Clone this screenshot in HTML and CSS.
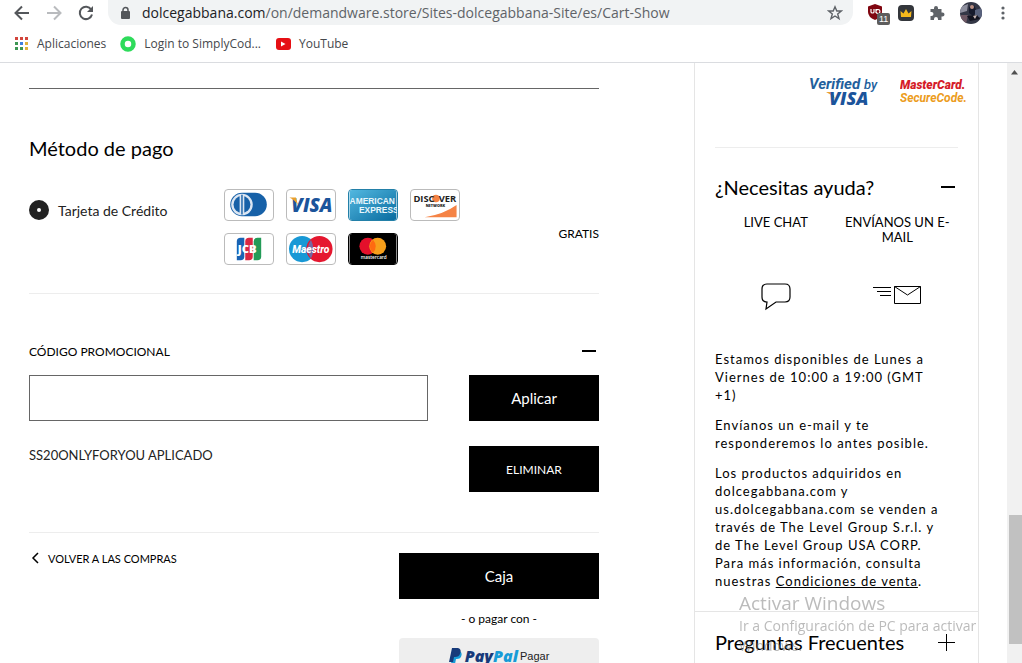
FILE: index.html
```html
<!DOCTYPE html>
<html lang="es">
<head>
    <meta charset="UTF-8">
    <meta name="viewport" content="width=device-width, initial-scale=1.0">
    <title>Cart-Show</title>
    <link rel="stylesheet" href="styles.css">
</head>
<body>

    <header class="browser">
        <div class="toolbar">
            <button class="tool" aria-label="Atrás">
                <svg width="16" height="16" viewBox="0 0 16 16" fill="none" stroke="#54575b" stroke-width="2"><path d="M15 8H2M8 1.500L1.500 8L8 14.500"/></svg>
            </button>
            <button class="tool" aria-label="Adelante">
                <svg width="16" height="16" viewBox="0 0 16 16" fill="none" stroke="#b9bbbe" stroke-width="2"><path d="M1 8H14M8 1.500L14.500 8L8 14.500"/></svg>
            </button>
            <button class="tool" aria-label="Recargar">
                <svg width="16" height="16" viewBox="0 0 16 16"><path d="M13.200 4.500A6.200 6.200 0 1 0 14 9.500" fill="none" stroke="#54575b" stroke-width="2"/><path d="M15 1V7H9Z" fill="#54575b"/></svg>
            </button>
            <div class="address">
                <svg width="10" height="14" viewBox="0 0 10 14"><rect x="0" y="5" width="9" height="8" rx="1" fill="#54575b"/><path d="M2 6V4a2.500 2.500 0 0 1 5 0V6" fill="none" stroke="#54575b" stroke-width="1.500"/></svg>
                <span class="url"><b>dolcegabbana.com</b>/on/demandware.store/Sites-dolcegabbana-Site/es/Cart-Show</span>
                <button class="star" aria-label="Añadir a marcadores">
                    <svg width="16" height="16" viewBox="0 0 16 16" fill="none" stroke="#5f6368" stroke-width="1.400"><path d="M8 1.800L9.800 6H14.300L10.700 9L12 13.600L8 11L4 13.600L5.300 9L1.700 6H6.200Z"/></svg>
                </button>
            </div>
            <div class="extensions">
                <button class="tool ublock" aria-label="uBlock">
                    <svg width="16" height="17" viewBox="0 0 16 17"><path d="M8 0L15 2.500V8Q15 13 8 16Q1 13 1 8V2.500Z" fill="#800610"/><path d="M4 5V8Q4 9 5.500 9T7 8V5M9 5V9M9 7A2 2 0 1 1 9 8" fill="none" stroke="#fff" stroke-width="1.200"/></svg>
                    <span class="badge">11</span>
                </button>
                <button class="tool" aria-label="SimplyCodes">
                    <svg width="16" height="16" viewBox="0 0 16 16"><rect width="16" height="16" rx="4" fill="#33363b"/><path d="M3 12L2.500 6L5.500 8.500L8 4L10.500 8.500L13.500 6L13 12Z" fill="#f5b81c"/></svg>
                </button>
                <button class="tool" aria-label="Extensiones">
                    <svg width="16" height="16" viewBox="0 0 16 16" fill="#5f6368"><path d="M1.500 4H5V3a2 2 0 0 1 4 0V4H12.500V7.500H13.500a2 2 0 0 1 0 4H12.500V15H9V14a2 2 0 0 0-4 0V15H1.500V11H2.500a2 2 0 0 0 0-4H1.500Z"/></svg>
                </button>
                <button class="tool" aria-label="Perfil">
                    <svg width="22" height="22" viewBox="0 0 22 22"><defs><clipPath id="face"><circle cx="11" cy="11" r="11"/></clipPath></defs><g clip-path="url(#face)"><rect width="22" height="22" fill="#343746"/><path d="M0 5L8 2L7 9L0 11Z" fill="#8d8e9d"/><path d="M1 13H8L6 22H0Z" fill="#6d5864"/><path d="M9 5L14 3L17 10L13 14L9 11Z" fill="#161a2c"/><circle cx="12" cy="5" r="2" fill="#b98f83"/><path d="M15 8L22 6V16L15 14Z" fill="#59627d"/><path d="M7 14L17 13L20 17L10 19Z" fill="#12131f"/><path d="M13 14L17 13L15 17Z" fill="#c5b4b2"/></g></svg>
                </button>
                <button class="tool" aria-label="Menú">
                    <svg width="4" height="14" viewBox="0 0 4 14" fill="#5f6368"><circle cx="2" cy="2" r="1.600"/><circle cx="2" cy="7" r="1.600"/><circle cx="2" cy="12" r="1.600"/></svg>
                </button>
            </div>
        </div>
        <nav class="bookmarks">
            <a href="#">
                <svg width="14" height="14" viewBox="0 0 14 14"><path d="M0 0h3v3H0zM5 0h3v3H5zM10 0h3v3h-3z" fill="#d2453c"/><path d="M0 5h3v3H0zM0 10h3v3H0zM5 10h3v3H5z" fill="#3d9653"/><path d="M5 5h3v3H5z" fill="#3f7fe0"/><path d="M10 5h3v3h-3zM10 10h3v3h-3z" fill="#e0b13c"/></svg>
                Aplicaciones
            </a>
            <a href="#">
                <svg width="16" height="16" viewBox="0 0 16 16"><circle cx="8" cy="8" r="5.500" fill="#fff" stroke="#2edb5b" stroke-width="4.500"/></svg>
                Login to SimplyCod...
            </a>
            <a href="#">
                <svg width="16" height="16" viewBox="0 0 16 16"><rect x="1" y="2" width="15" height="12" rx="3" fill="#e60f14"/><path d="M6 5.500L10.500 8L6 10.500Z" fill="#fff"/></svg>
                YouTube
            </a>
        </nav>
    </header>

    <div class="viewport">
        <main class="cart">
            <section class="payment">
                <h2>Método de pago</h2>
                <div class="payment-row">
                    <label class="method"><input type="radio" name="method" checked> Tarjeta de Crédito</label>
                    <div class="cards">
                        <svg class="card" viewBox="0 0 50 32" role="img" aria-label="Diners Club"><rect x="5" y="3" width="39" height="25" rx="12.500" fill="#1761a8"/><circle cx="17.500" cy="15.500" r="11.500" fill="#dce6f2"/><circle cx="17.500" cy="15.500" r="9" fill="#1761a8"/><path d="M15 5H20V26H15Z" fill="#dce6f2"/><path d="M17.500 5V26" stroke="#1761a8" stroke-width="1.500"/></svg>
                        <svg class="card" viewBox="0 0 50 32" role="img" aria-label="Visa"><text x="4" y="23" class="logo-text visa">VISA</text><path d="M2 8H9L11 16Q8 11 2 8Z" fill="#eaa02c"/></svg>
                        <svg class="card amex" viewBox="0 0 50 32" role="img" aria-label="American Express"><defs><linearGradient id="amex" x2="1" y2="1"><stop stop-color="#53b8e0"/><stop offset="1" stop-color="#086b9f"/></linearGradient></defs><rect width="50" height="32" fill="url(#amex)"/><text x="0" y="15" class="logo-text amex-text">AMERICAN</text><text x="10" y="25" class="logo-text amex-text">EXPRESS</text></svg>
                        <svg class="card" viewBox="0 0 50 32" role="img" aria-label="Discover"><path d="M14 29Q34 26 48 16V29Z" fill="#f58345"/><circle cx="26" cy="9" r="4" fill="#f58345"/><text x="2" y="13" class="logo-text discover">DISC</text><text x="29" y="13" class="logo-text discover">VER</text><text x="15" y="18" class="logo-text network">NETWORK</text></svg>
                        <svg class="card" viewBox="0 0 50 32" role="img" aria-label="JCB"><path d="M12 8Q12 4 16 4H20V24Q20 28 16 28H12Z" fill="#1863b4"/><path d="M21 8Q21 4 25 4H29V24Q29 28 25 28H21Z" fill="#d92742"/><path d="M30 8Q30 4 34 4H38V24Q38 28 34 28H30Z" fill="#239b57"/><text x="13" y="20" class="logo-text jcb">JCB</text></svg>
                        <svg class="card" viewBox="0 0 50 32" role="img" aria-label="Maestro"><circle cx="15.500" cy="16" r="14" fill="#1898d5"/><circle cx="34" cy="16" r="14" fill="#e5172f"/><path d="M25 6Q18 16 25 26Q30 16 25 6Z" fill="#7666a0"/><text x="5" y="20" class="logo-text maestro">Maestro</text></svg>
                        <svg class="card mastercard" viewBox="0 0 50 32" role="img" aria-label="Mastercard"><rect width="50" height="32" fill="#000"/><circle cx="19.500" cy="13" r="9" fill="#e4102b"/><circle cx="30" cy="13" r="9" fill="#f79f1b"/><path d="M25 6Q18 13 25 20Q31 13 25 6Z" fill="#ff6a10"/><text x="12" y="27" class="logo-text mc-text">mastercard</text></svg>
                    </div>
                    <span class="price">GRATIS</span>
                </div>
            </section>

            <section class="promo">
                <div class="promo-title">
                    <label for="promoCode">CÓDIGO PROMOCIONAL</label>
                    <button class="toggle" aria-label="Cerrar código promocional"><svg width="14" height="2"><rect width="14" height="2"/></svg></button>
                </div>
                <div class="promo-row">
                    <input type="text" id="promoCode">
                    <button class="black-button large">Aplicar</button>
                </div>
                <div class="promo-row">
                    <span class="applied">SS20ONLYFORYOU APLICADO</span>
                    <button class="black-button">ELIMINAR</button>
                </div>
            </section>

            <section class="checkout">
                <a href="#" class="back"><svg width="8" height="12" viewBox="0 0 8 12" fill="none" stroke="#000" stroke-width="1.500"><path d="M7 1L2 6L7 11"/></svg>VOLVER A LAS COMPRAS</a>
                <div class="pay">
                    <button class="black-button large">Caja</button>
                    <p>- o pagar con -</p>
                    <button class="paypal">
                        <svg width="14" height="16" viewBox="0 0 14 16"><path d="M4 3H10Q14 4 12 9Q11 11 8 11H7L6 16H2Z" fill="#179bd7"/><path d="M3 0H9Q13 1 11 6Q10 9 6 9H5L4 14H0Z" fill="#173a7a"/></svg>
                        <span class="paypal-logo">Pay<i>Pal</i></span>
                        Pagar
                    </button>
                </div>
            </section>
        </main>

        <aside class="sidebar">
            <div class="secure">
                <svg width="70" height="34" viewBox="0 0 70 34" role="img" aria-label="Verified by Visa"><text x="0" y="15" class="logo-text verified">Verified</text><text x="55" y="15" class="logo-text by">by</text><path d="M17 18H23L26 25Q22 20 17 18Z" fill="#eaa02c"/><text x="20" y="31" class="logo-text visa-small">VISA</text></svg>
                <svg width="69" height="34" viewBox="0 0 69 34" role="img" aria-label="MasterCard SecureCode"><text x="0" y="15" class="logo-text master">MasterCard.</text><text x="0" y="28" class="logo-text code">SecureCode.</text></svg>
            </div>
            <section class="help">
                <h3>¿Necesitas ayuda? <button class="toggle" aria-label="Cerrar ayuda"><svg width="14" height="2"><rect width="14" height="2"/></svg></button></h3>
                <div class="contact">
                    <a href="#">
                        <span>LIVE CHAT</span>
                        <svg width="30" height="28" viewBox="0 0 30 28" fill="none" stroke="#000" stroke-width="1.200"><path d="M6 1H24Q29 1 29 6V14Q29 19 24 19H15L5 26L6 19Q1 19 1 14V6Q1 1 6 1Z"/></svg>
                    </a>
                    <a href="#">
                        <span>ENVÍANOS UN E-MAIL</span>
                        <svg width="50" height="28" viewBox="0 0 50 28" fill="none" stroke="#000"><path d="M1 4.500H19M5 8.500H19M8 12.500H19M22.500 3.500H48.500V20.500H22.500ZM22.500 3.500L35.500 12L48.500 3.500"/></svg>
                    </a>
                </div>
                <p>Estamos disponibles de Lunes a Viernes de 10:00 a 19:00 (GMT +1)</p>
                <p>Envíanos un e-mail y te responderemos lo antes posible.</p>
                <p>Los productos adquiridos en dolcegabbana.com y us.dolcegabbana.com se venden a través de The Level Group S.r.l. y de The Level Group USA CORP. Para más información, consulta nuestras <a href="#">Condiciones de venta</a>.</p>
            </section>
            <section class="faq">
                <h3>Preguntas Frecuentes <button class="toggle" aria-label="Abrir preguntas"><svg width="17" height="18" viewBox="0 0 17 18" stroke="#000"><path d="M0 9.500H17M8.500 1V18"/></svg></button></h3>
            </section>
        </aside>

        <div class="scrollbar">
            <svg width="7" height="5" viewBox="0 0 7 5"><path d="M0 4.500L3.500 0L7 4.500Z" fill="#505050"/></svg>
            <div class="thumb"></div>
        </div>
    </div>

    <div class="watermark">
        <strong>Activar Windows</strong>
        <span>Ir a Configuración de PC para activar Windows.</span>
    </div>

</body>
</html>
```
FILE: styles.css
```css
* {
    box-sizing: border-box;
}

body {
    margin: 0;
    height: 100vh;
    display: flex;
    flex-direction: column;
    overflow: hidden;
    background: #fff;
    color: #000;
    font-family: Lato, sans-serif;
    font-size: 13px;
}

button {
    padding: 0;
    border: 0;
    background: none;
    color: inherit;
    font-family: inherit;
}

a {
    color: inherit;
    text-decoration: none;
}

svg {
    display: block;
    flex: none;
}

h2, h3, p {
    margin: 0;
    font-weight: normal;
}

h2, h3 {
    font-size: 20px;
    line-height: 24px;
}

/* browser bars */
.browser {
    flex: none;
    border-bottom: 1px solid #dadce0;
    font-family: "Open Sans", sans-serif;
}

.toolbar {
    display: flex;
    align-items: center;
    height: 25px;
    padding: 0 17px 0 14px;
    gap: 16px;
}

.tool {
    position: relative;
    display: flex;
}

.address {
    flex: 1;
    display: flex;
    align-items: center;
    height: 25px;
    margin-left: -2px;
    padding: 0 10px 0 13px;
    gap: 11px;
    border-radius: 0 0 13px 13px;
    background: #f1f3f4;
    color: #5f6368;
    font-size: 14px;
}

.url {
    flex: 1;
    white-space: nowrap;
}

.url b {
    color: #202124;
    font-weight: normal;
}

.extensions {
    display: flex;
    align-items: center;
    margin-left: -2px;
    gap: 15px;
}

.extensions .tool:last-child {
    margin-left: 4px;
}

.badge {
    position: absolute;
    left: 10px;
    top: 9px;
    padding: 0 2px;
    border-radius: 2px;
    background: #5d5d5d;
    color: #fff;
    font-family: "Liberation Sans", sans-serif;
    font-size: 9px;
    line-height: 12px;
}

.bookmarks {
    display: flex;
    align-items: center;
    height: 37px;
    padding-left: 15px;
    gap: 14px;
    color: #45484c;
    font-size: 12px;
}

.bookmarks a {
    display: flex;
    align-items: center;
    gap: 8px;
}

/* page */
.viewport {
    flex: 1;
    min-height: 0;
    display: flex;
    overflow: hidden;
}

.cart {
    flex: 1;
    margin: 25px 95px 0 29px;
}

.payment {
    padding-top: 47px;
    border-top: 1px solid #666;
}

.payment-row {
    display: flex;
    padding: 29px 0 28px;
    border-bottom: 1px solid #ededed;
}

.method {
    display: flex;
    align-items: center;
    gap: 9px;
    width: 195px;
    height: 42px;
    color: #222;
    font-size: 14px;
}

.method input {
    appearance: none;
    width: 20px;
    height: 20px;
    margin: 0;
    border: 8px solid #222;
    border-radius: 50%;
    background: #fff;
}

.cards {
    display: flex;
    flex-wrap: wrap;
    align-content: flex-start;
    width: 240px;
    gap: 12px;
}

.card {
    width: 50px;
    height: 32px;
    border: 1px solid #bbb;
    border-radius: 4px;
}

.amex {
    border-color: #2380a8;
}

.mastercard {
    border-color: #000;
}

.price {
    margin-left: auto;
    align-self: center;
    padding-top: 12px;
    font-size: 12px;
}

.promo {
    padding: 47px 0 40px;
    border-bottom: 1px solid #ededed;
}

.promo-title {
    display: flex;
    justify-content: space-between;
    align-items: center;
    height: 20px;
    padding-right: 3px;
    font-size: 12px;
}

.promo-row {
    display: flex;
    justify-content: space-between;
    margin-top: 14px;
}

.promo-row + .promo-row {
    margin-top: 25px;
}

.promo-row input {
    width: 70%;
    height: 46px;
    padding: 0 12px;
    border: 1px solid #666;
    font-size: 14px;
}

.promo-row .black-button {
    width: 130px;
}

.applied {
    color: #222;
    line-height: 18px;
}

.black-button {
    height: 46px;
    background: #000;
    color: #fff;
    font-size: 12px;
}

.large {
    font-size: 15px;
}

.checkout {
    display: flex;
    justify-content: space-between;
    align-items: flex-start;
    padding-top: 20px;
}

.back {
    display: flex;
    align-items: center;
    height: 10px;
    padding-left: 2px;
    gap: 9px;
    font-size: 11px;
}

.pay {
    display: flex;
    flex-direction: column;
    width: 200px;
    text-align: center;
}

.pay p {
    height: 39px;
    font-size: 12px;
    line-height: 39px;
}

.paypal {
    display: flex;
    justify-content: center;
    align-items: center;
    gap: 2px;
    height: 36px;
    border-radius: 4px;
    background: #eee;
    color: #222;
    font-family: "Liberation Sans", sans-serif;
    font-size: 11px;
}

.paypal-logo {
    color: #173a7a;
    font-family: "Open Sans", sans-serif;
    font-size: 16px;
    font-style: italic;
    font-weight: 800;
}

.paypal-logo i {
    color: #179bd7;
}

/* help column */
.sidebar {
    flex: none;
    width: 285px;
    margin-right: 28px;
    border: 1px solid #e5e5e5;
    border-width: 0 1px;
}

.secure {
    display: flex;
    justify-content: flex-end;
    height: 85px;
    margin: 0 20px;
    padding-top: 11px;
    gap: 21px;
    border-bottom: 1px solid #ededed;
}

.secure svg {
    margin-right: -11px;
}

.secure svg:first-child {
    margin-right: 0;
}

.help {
    padding: 27px 20px 21px;
}

h3 {
    display: flex;
    justify-content: space-between;
    align-items: center;
    padding-right: 3px;
}

.contact {
    display: grid;
    grid-template-columns: 1fr 1fr;
    margin-bottom: 39px;
    padding-top: 16px;
    line-height: 15px;
    text-align: center;
}

.contact a {
    display: flex;
    flex-direction: column;
    align-items: center;
}

.contact span {
    height: 68px;
    width: 120px;
}

.help p {
    margin-bottom: 12px;
    padding-right: 13px;
    font-size: 13px;
    letter-spacing: 1px;
    line-height: 18px;
}

.help p:last-child {
    margin: 0;
}

.help p a {
    text-decoration: underline;
}

.faq {
    padding: 18px 20px;
    border-top: 1px solid #e5e5e5;
}

.scrollbar {
    position: relative;
    flex: none;
    width: 15px;
    padding: 7px 4px;
    background: #f1f1f1;
}

.thumb {
    position: absolute;
    left: 2px;
    right: 0;
    bottom: 19px;
    height: 129px;
    background: #c1c1c1;
}

.watermark {
    position: fixed;
    right: 33px;
    bottom: 7px;
    width: 250px;
    color: rgba(120, 120, 120, 0.5);
    font-family: "Open Sans", sans-serif;
    font-size: 14px;
    line-height: 20px;
    pointer-events: none;
}

.watermark strong {
    display: block;
    font-size: 19px;
    font-weight: normal;
    line-height: 26px;
}

/* card and brand lettering */
.logo-text {
    font-family: "Open Sans", sans-serif;
    font-style: italic;
    font-weight: 800;
}

.visa {
    fill: #1b549b;
    font-size: 20px;
}

.amex-text {
    fill: #e8f6fc;
    font-family: "Liberation Sans", sans-serif;
    font-size: 9px;
    font-style: normal;
    font-weight: 700;
}

.discover {
    fill: #222;
    font-size: 10px;
    font-style: normal;
    font-weight: 700;
}

.network {
    fill: #222;
    font-size: 4px;
    font-style: normal;
}

.jcb {
    fill: #fff;
    font-size: 12px;
    font-style: normal;
}

.maestro {
    fill: #fff;
    font-family: Roboto, sans-serif;
    font-size: 11px;
}

.mc-text {
    fill: #fff;
    font-size: 5px;
    font-style: normal;
    font-weight: 600;
}

.verified {
    fill: #235f9c;
    font-family: Roboto, sans-serif;
    font-size: 15px;
    font-weight: 700;
}

.by {
    fill: #235f9c;
    font-family: Roboto, sans-serif;
    font-size: 13px;
    font-weight: 500;
}

.visa-small {
    fill: #1b549b;
    font-size: 18px;
}

.master {
    fill: #d51c29;
    font-family: Roboto, sans-serif;
    font-size: 12px;
    font-weight: 900;
}

.code {
    fill: #ec9c20;
    font-family: Roboto, sans-serif;
    font-size: 12px;
    font-weight: 700;
}
```
